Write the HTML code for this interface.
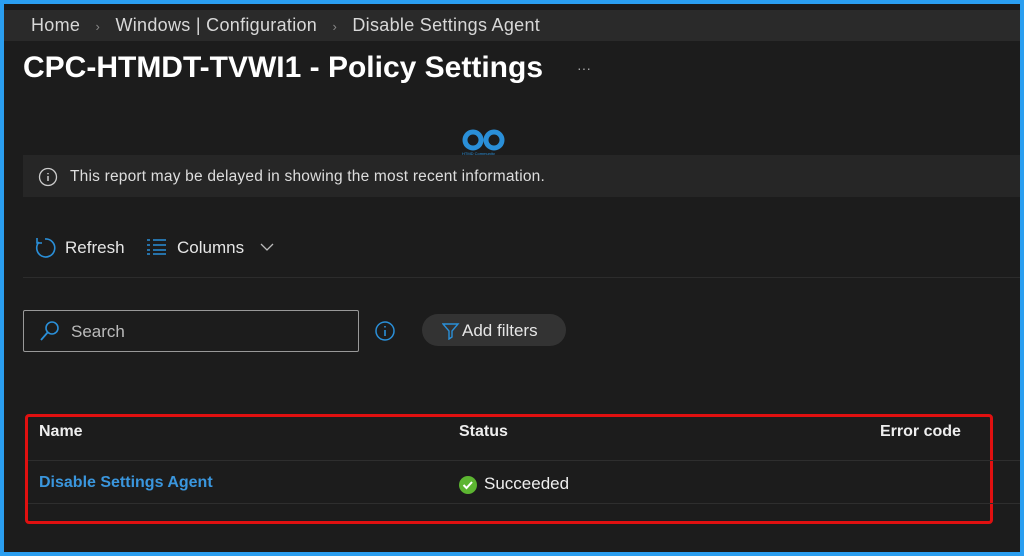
<!DOCTYPE html>
<html><head><style>
body{margin:0;width:1024px;height:556px;overflow:hidden;background:#2a9ef0;font-family:"Liberation Sans",sans-serif;}
.f{position:absolute;left:4px;top:4px;width:1016px;height:548px;background:#1c1c1c;overflow:hidden}
.t{position:absolute;white-space:nowrap}
</style></head><body>
<div class="f">
<div style="position:absolute;left:0;top:0;width:1016px;height:6px;background:#1a1a1a"></div>
<div style="position:absolute;left:0;top:6px;width:1016px;height:31px;background:#2a2a2a"></div>
<div class="t" style="left:27px;top:11px;font-size:18px;color:#d8d8d8;letter-spacing:0.3px">Home <span style="color:#888;font-size:13px;margin:0 10px">›</span> Windows | Configuration <span style="color:#888;font-size:13px;margin:0 10px">›</span> Disable Settings Agent</div>
<div class="t" style="left:19px;top:47px;font-size:30px;font-weight:bold;color:#fff">CPC-HTMDT-TVWI1 - Policy Settings</div>
<div class="t" style="left:573px;top:56px;font-size:14px;color:#aaa">···</div>
<svg style="position:absolute;left:456px;top:124px" width="50" height="28"><circle cx="13" cy="12" r="8" fill="none" stroke="#2a8fd8" stroke-width="5"/><circle cx="34" cy="12" r="8" fill="none" stroke="#2a8fd8" stroke-width="5"/><text x="2" y="27" font-size="4" fill="#2a8fd8">HTMD Community</text></svg>
<div style="position:absolute;left:19px;top:151px;width:997px;height:42px;background:#262626"></div>
<svg style="position:absolute;left:34px;top:163px" width="20" height="20"><circle cx="10" cy="10" r="8.5" fill="none" stroke="#ccc" stroke-width="1.3"/><path d="M10 9v5M10 6v1.2" stroke="#ccc" stroke-width="1.5"/></svg>
<div class="t" style="left:66px;top:164px;font-size:15.5px;color:#ddd;letter-spacing:0.2px">This report may be delayed in showing the most recent information.</div>
<svg style="position:absolute;left:29px;top:232px" width="24" height="24"><path d="M6 6A9 9 0 1 0 12 3" fill="none" stroke="#2a8fd8" stroke-width="1.6"/><path d="M4 2v5h5" fill="none" stroke="#2a8fd8" stroke-width="1.6"/></svg>
<div class="t" style="left:61px;top:234px;font-size:17px;color:#e6e6e6">Refresh</div>
<svg style="position:absolute;left:142px;top:234px" width="22" height="18"><g stroke="#2a8fd8" stroke-width="1.6"><path d="M1 2h3M1 7h3M1 12h3M1 16h3M7 2h13M7 7h13M7 12h13M7 16h13"/></g></svg>
<div class="t" style="left:173px;top:234px;font-size:17px;color:#e6e6e6">Columns</div>
<svg style="position:absolute;left:256px;top:238px" width="14" height="10"><path d="M1 2l6 6 6-6" fill="none" stroke="#bbb" stroke-width="1.3"/></svg>
<div style="position:absolute;left:19px;top:273px;width:997px;height:1px;background:#2c2c2c"></div>
<div style="position:absolute;left:19px;top:306px;width:334px;height:40px;border:1px solid #999;border-radius:2px"></div>
<svg style="position:absolute;left:35px;top:316px" width="22" height="22"><circle cx="13" cy="8" r="6" fill="none" stroke="#2a8fd8" stroke-width="1.6"/><path d="M9 12L2 20" stroke="#2a8fd8" stroke-width="1.8"/></svg>
<div class="t" style="left:67px;top:318px;font-size:17px;color:#bbb">Search</div>
<svg style="position:absolute;left:370px;top:316px" width="22" height="22"><circle cx="11" cy="11" r="9" fill="none" stroke="#2a8fd8" stroke-width="1.5"/><path d="M11 10v6M11 6v1.5" stroke="#2a8fd8" stroke-width="1.6"/></svg>
<div style="position:absolute;left:418px;top:310px;width:144px;height:32px;border-radius:16px;background:#333"></div>
<svg style="position:absolute;left:438px;top:318px" width="18" height="18"><path d="M1 2h15l-6 7v6l-3 2V9z" fill="none" stroke="#2a8fd8" stroke-width="1.4"/></svg>
<div class="t" style="left:458px;top:317px;font-size:17px;color:#e6e6e6">Add filters</div>
<div style="position:absolute;left:21px;top:410px;width:962px;height:104px;border:3px solid #e01010;border-radius:4px"></div>
<div class="t" style="left:35px;top:419px;font-size:16px;font-weight:bold;color:#eee">Name</div>
<div class="t" style="left:455px;top:419px;font-size:16px;font-weight:bold;color:#eee">Status</div>
<div class="t" style="left:876px;top:419px;font-size:16px;font-weight:bold;color:#eee">Error code</div>
<div style="position:absolute;left:24px;top:456px;width:992px;height:1px;background:#2e2e2e"></div>
<div style="position:absolute;left:24px;top:499px;width:992px;height:1px;background:#2e2e2e"></div>
<div class="t" style="left:35px;top:470px;font-size:16px;font-weight:bold;color:#3a96dd">Disable Settings Agent</div>
<svg style="position:absolute;left:454px;top:471px" width="20" height="20"><circle cx="10" cy="10" r="9" fill="#5cb531"/><path d="M5.5 10l3 3 5.5-6" fill="none" stroke="#fff" stroke-width="2"/></svg>
<div class="t" style="left:480px;top:470px;font-size:17px;color:#eee">Succeeded</div>
</div>
</body></html>
